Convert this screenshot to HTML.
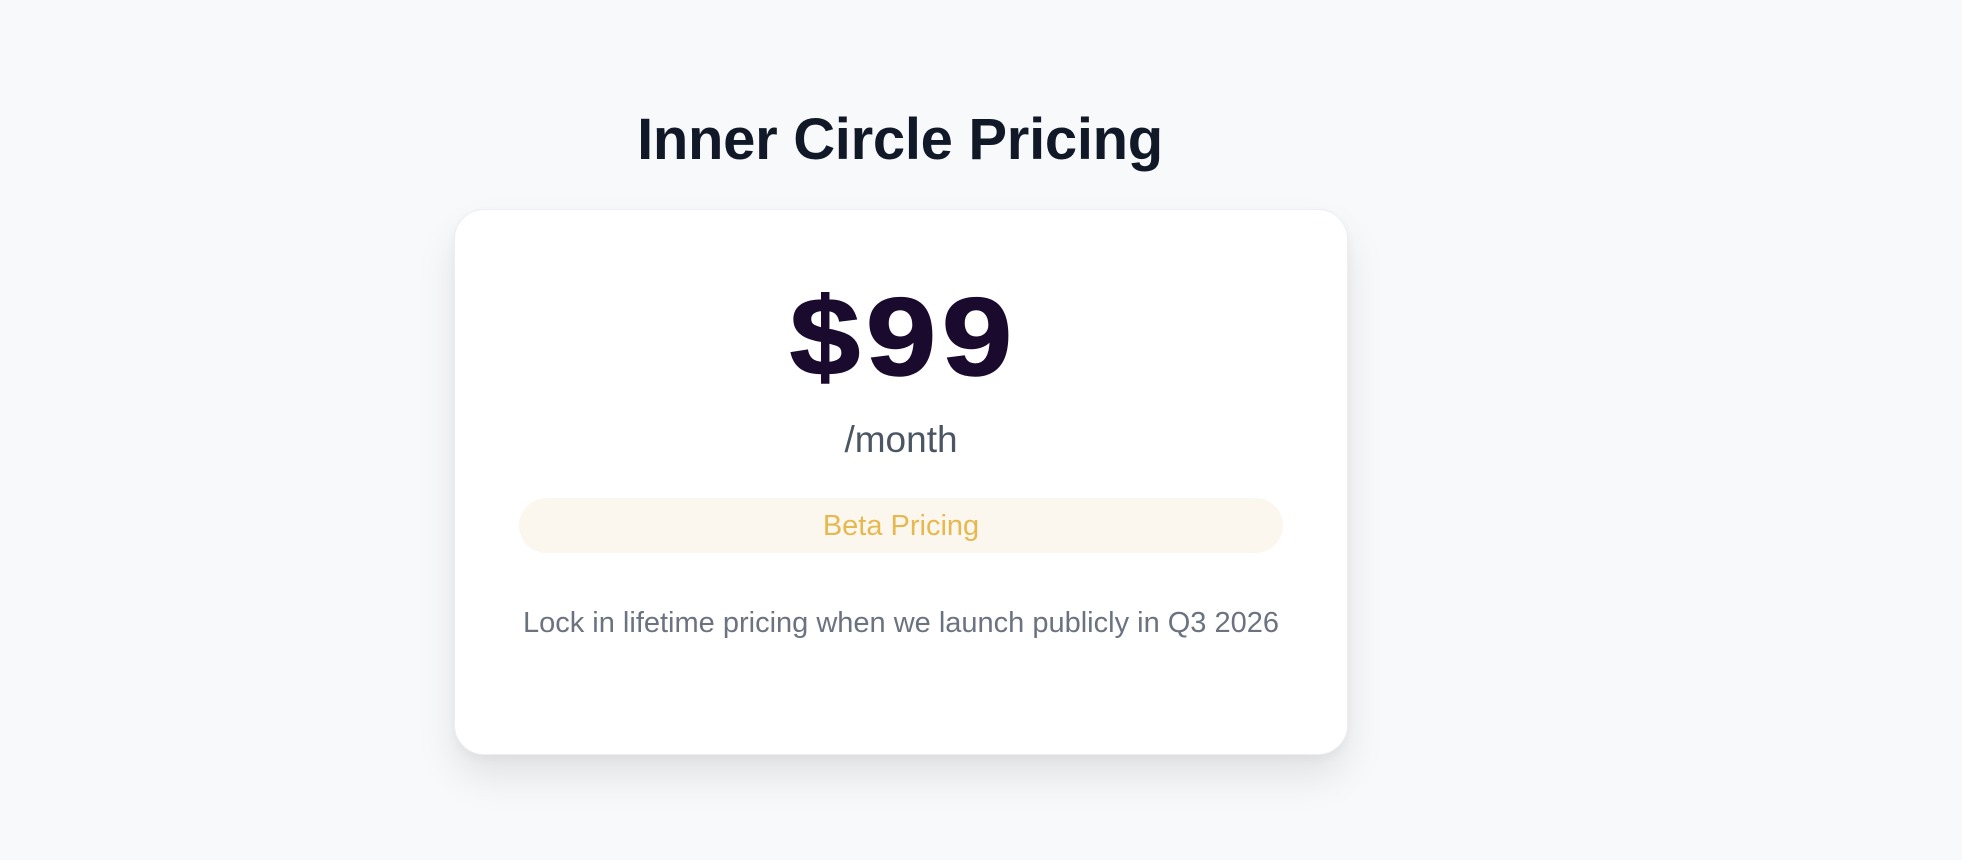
<!DOCTYPE html>
<html><head><meta charset="utf-8"><style>
html,body{margin:0;padding:0;width:1962px;height:860px;background:#f8f9fb;font-family:"Liberation Sans",sans-serif;overflow:hidden;position:relative}
h1{position:absolute;left:0;width:1800px;top:104px;margin:0;text-align:center;font-size:58px;font-weight:700;color:#111827;line-height:72px;letter-spacing:-0.3px}
.card{position:absolute;left:454px;top:209px;width:892px;height:544px;background:#fff;border:1px solid #eceef1;border-radius:30px;box-shadow:0 22px 40px rgba(0,0,0,0.09),0 4px 10px rgba(0,0,0,0.04)}
.price{position:absolute;left:0;right:0;top:268px;text-align:center;font-size:110px;font-weight:700;color:#1a0a2e;line-height:140px;letter-spacing:5px;text-indent:5px;transform:scaleX(1.15);-webkit-text-stroke:1.5px #1a0a2e}
.month{position:absolute;left:0;right:0;top:415px;text-align:center;font-size:37px;color:#4b5563;line-height:50px}
.badge{position:absolute;left:519px;top:498px;width:764px;height:55px;border-radius:28px;background:#fcf7ee;color:#e5b94f;font-size:29px;line-height:57px;text-align:center}
.desc{position:absolute;left:450px;width:902px;top:603px;text-align:center;font-size:29px;color:#6b7280;line-height:40px;white-space:nowrap}
</style></head><body>
<h1>Inner Circle Pricing</h1>
<div class="card"></div>
<div style="position:absolute;left:454px;width:894px;top:0;height:860px">
<div class="price">$99</div>
<div class="month">/month</div>
</div>
<div class="badge">Beta Pricing</div>
<div class="desc">Lock in lifetime pricing when we launch publicly in Q3 2026</div>
</body></html>
